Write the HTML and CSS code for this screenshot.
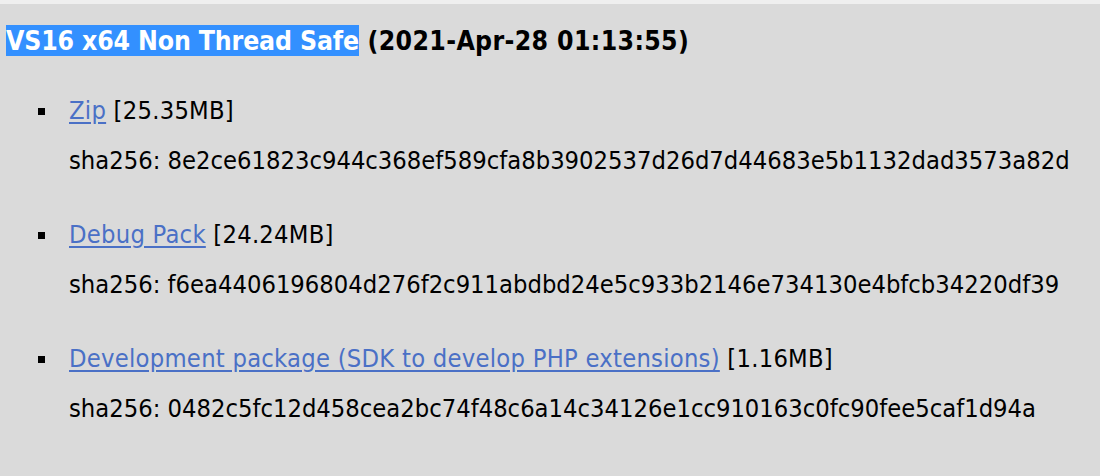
FILE: index.html
```html
<!DOCTYPE html>
<html>
<head>
<meta charset="utf-8">
<link rel="stylesheet" href="styles.css">
</head>
<body>
<div class="topstrip"></div>
<main class="content">
  <h3 class="title"><span class="sel">VS16 x64 Non Thread Safe</span> (2021-Apr-28 01:13:55)</h3>
  <ul class="downloads">
    <li class="item">
      <div class="line name"><a href="#" class="link">Zip</a> [25.35MB]</div>
      <div class="line hash">sha256: 8e2ce61823c944c368ef589cfa8b3902537d26d7d44683e5b1132dad3573a82d</div>
    </li>
    <li class="item">
      <div class="line name"><a href="#" class="link">Debug Pack</a> [24.24MB]</div>
      <div class="line hash">sha256: f6ea4406196804d276f2c911abdbd24e5c933b2146e734130e4bfcb34220df39</div>
    </li>
    <li class="item">
      <div class="line name"><a href="#" class="link">Development package (SDK to develop PHP extensions)</a> [1.16MB]</div>
      <div class="line hash">sha256: 0482c5fc12d458cea2bc74f48c6a14c34126e1cc910163c0fc90fee5caf1d94a</div>
    </li>
  </ul>
</main>
</body>
</html>
```
FILE: styles.css
```css
html, body {
  margin: 0;
  padding: 0;
  background: #dadada;
}
body {
  font-family: "DejaVu Sans Condensed", "DejaVu Sans", sans-serif;
  color: #000;
  height: 476px;
  overflow: hidden;
}
.topstrip {
  height: 4px;
  background: #efefef;
}
.content {
  padding: 0 0 0 6px;
}
.title {
  margin: 22px 0 0 0;
  font-size: 26.4px;
  line-height: 30px;
  font-weight: bold;
  letter-spacing: 0.35px;
}
.sel {
  background: #3390ff;
  color: #fff;
  letter-spacing: -0.15px;
}
.downloads {
  list-style: none;
  margin: 40px 0 0 0;
  padding: 0 0 0 32px;
}
.item {
  display: grid;
  grid-template-columns: 31px auto;
  align-items: start;
  font-size: 25.3px;
  margin-bottom: 44px;
}
.item::before {
  content: "";
  grid-column: 1;
  grid-row: 1;
  width: 7px;
  height: 7px;
  margin-top: 12px;
  background: #000;
}
.line {
  grid-column: 2;
  line-height: 30px;
}
.name {
  letter-spacing: 0.25px;
}
.hash {
  margin-top: 20px;
}
.link {
  color: #4a70c6;
  text-decoration: underline;
  text-underline-offset: 3px;
}
```
